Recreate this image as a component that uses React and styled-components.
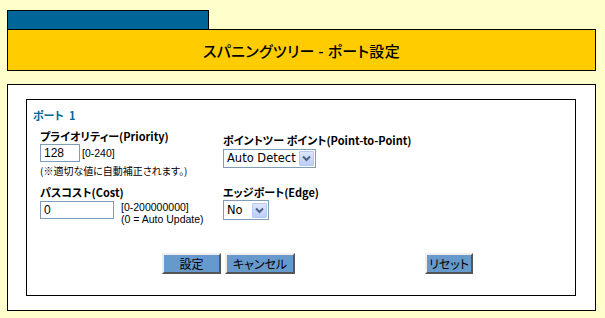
import React from "react";
import styled, { createGlobalStyle } from "styled-components";

const Global = createGlobalStyle`
  html, body { margin: 0; padding: 0; background: #FFFFCC; }
  body { font-family: "Noto Sans CJK JP", "Liberation Sans", sans-serif; color: #000; }
`;

const Page = styled.div`
  padding: 10px 0 0 7px;
  width: 589px;
`;

const Tab = styled.div`
  box-sizing: border-box;
  width: 202px;
  height: 19px;
  background: #006699;
  border: 1px solid #000;
  border-bottom: none;
`;

const TitleBar = styled.div`
  box-sizing: border-box;
  height: 42px;
  background: #FFCC00;
  border: 1px solid #000;
  display: flex;
  align-items: center;
  justify-content: center;
`;

const Title = styled.h1`
  margin: 0;
  font-size: 15px;
  font-weight: 500;
  font-feature-settings: "palt";
  letter-spacing: 0.3px;
`;

const OuterBox = styled.div`
  box-sizing: border-box;
  margin-top: 13px;
  height: 227px;
  background: #fff;
  border: 1px solid #000;
  padding: 14px 19px 14px 18px;
`;

const InnerBox = styled.div`
  box-sizing: border-box;
  height: 197px;
  border: 1px solid #000;
  padding: 8px 6px 0 6px;
`;

const SectionTitle = styled.div`
  font-size: 11px;
  font-weight: bold;
  color: #006699;
  line-height: 14px;
  font-feature-settings: "palt";
  word-spacing: 3px;
`;

const FormGrid = styled.div`
  display: grid;
  grid-template-columns: 183px auto;
  margin: 7px 0 0 7px;
  row-gap: 8px;
`;

const Field = styled.div`
  display: flex;
  flex-direction: column;
  padding-top: ${p => p.$offset || 0}px;
`;

const Label = styled.div`
  font-size: 11px;
  font-weight: bold;
  line-height: 14px;
  font-feature-settings: "palt";
  margin-bottom: ${p => p.$gap || 1}px;
  white-space: nowrap;
`;

const Row = styled.div`
  display: flex;
  align-items: ${p => p.$align || "center"};
  gap: ${p => p.$gap || 2}px;
`;

const TextInput = styled.input`
  box-sizing: border-box;
  width: ${p => p.$w}px;
  height: 18px;
  border: 1px solid #7F9DB9;
  padding: 0 3px;
  font-family: "Liberation Sans", sans-serif;
  font-size: 12px;
  color: #000;
  outline: none;
`;

const HintStack = styled.div`
  display: flex;
  flex-direction: column;
`;

const Hint = styled.div`
  font-family: "Liberation Sans", sans-serif;
  font-size: 10.5px;
  line-height: 12px;
  white-space: nowrap;
`;

const Note = styled.div`
  font-size: 10px;
  line-height: 12px;
  margin-top: 3px;
  white-space: nowrap;
  font-feature-settings: "palt";
`;

const SelectBox = styled.div`
  box-sizing: border-box;
  display: flex;
  align-items: center;
  width: ${p => p.$w}px;
  height: ${p => p.$h || 19}px;
  border: 1px solid #7F9DB9;
  padding: 1px;
  background: #fff;
`;

const SelectText = styled.div`
  flex: 1;
  padding-left: 2px;
  font-family: "DejaVu Sans", sans-serif;
  font-size: 11.5px;
  line-height: 15px;
`;

const ArrowBox = styled.div`
  box-sizing: border-box;
  width: 15px;
  height: 15px;
  border: 1px solid #B5C8F4;
  border-radius: 1px;
  background: linear-gradient(#DCE6FD, #BBCEF8);
  display: flex;
  align-items: center;
  justify-content: center;
`;

const Buttons = styled.div`
  display: flex;
  align-items: center;
  margin: 28px 0 0 129px;
`;

const Btn = styled.button`
  box-sizing: border-box;
  width: ${p => p.$w}px;
  height: 21px;
  margin-left: ${p => p.$ml || 0}px;
  background: #6699CC;
  border: 2px solid;
  border-color: #EEEEEE #555555 #555555 #EEEEEE;
  font-family: "Noto Sans CJK JP", sans-serif;
  font-size: 12px;
  line-height: 15px;
  padding: 0;
  color: #000;
  font-feature-settings: "palt";
`;

const Select = ({ value, w, h }) => (
  <SelectBox $w={w} $h={h}>
    <SelectText>{value}</SelectText>
    <ArrowBox>
      <svg width="9" height="7" viewBox="0 0 9 7">
        <path d="M1 1.5 L4.5 5 L8 1.5" fill="none" stroke="#4D6185" strokeWidth="2" />
      </svg>
    </ArrowBox>
  </SelectBox>
);

export default function App() {
  return (
    <>
      <Global />
      <Page>
        <Tab />
        <TitleBar>
          <Title>スパニングツリー - ポート設定</Title>
        </TitleBar>
        <OuterBox>
          <InnerBox>
            <SectionTitle>ポート 1</SectionTitle>
            <FormGrid>
              <Field>
                <Label>プライオリティー(Priority)</Label>
                <Row>
                  <TextInput $w={40} defaultValue="128" />
                  <Hint>[0-240]</Hint>
                </Row>
                <Note>(※適切な値に自動補正されます。)</Note>
              </Field>
              <Field $offset={4}>
                <Label $gap={2}>ポイントツー ポイント(Point-to-Point)</Label>
                <Select value="Auto Detect" w={93} />
              </Field>
              <Field>
                <Label $gap={2}>パスコスト(Cost)</Label>
                <Row $align="flex-start" $gap={7}>
                  <TextInput $w={74} defaultValue="0" />
                  <HintStack>
                    <Hint>[0-200000000]</Hint>
                    <Hint>(0 = Auto Update)</Hint>
                  </HintStack>
                </Row>
              </Field>
              <Field>
                <Label $gap={0}>エッジポート(Edge)</Label>
                <Select value="No" w={46} h={20} />
              </Field>
            </FormGrid>
            <Buttons>
              <Btn $w={59}>設定</Btn>
              <Btn $w={70} $ml={4}>キャンセル</Btn>
              <Btn $w={48} $ml={130}>リセット</Btn>
            </Buttons>
          </InnerBox>
        </OuterBox>
      </Page>
    </>
  );
}
